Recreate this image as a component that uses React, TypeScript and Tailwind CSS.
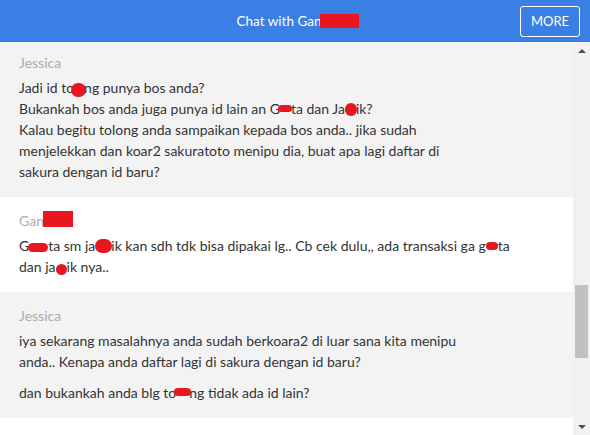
import React from 'react'

const Blot = ({ className }: { className: string }) => (
  <span className={`inline-block bg-[#e8161e] rounded-full ${className}`} />
)

const Message = ({
  name,
  white,
  className = '',
  children,
}: {
  name: React.ReactNode
  white?: boolean
  className?: string
  children: React.ReactNode
}) => (
  <div className={`${white ? 'bg-white' : 'bg-[#f3f3f4]'} px-[19px] pt-[13px] pb-[15px] ${className}`}>
    <div className="text-[14px] leading-[21px] text-[#acacac] mb-[4px]">{name}</div>
    <div className="text-[14px] leading-[21px] text-[#333333]">{children}</div>
  </div>
)

export default function App() {
  return (
    <div className="w-[590px] h-[435px] overflow-hidden flex flex-col bg-white font-['Lato','Open_Sans',sans-serif]">
      {/* Header */}
      <div className="h-[42px] shrink-0 bg-[#3a7fe3] grid grid-cols-[1fr_auto_1fr] items-center">
        <div />
        <div className="text-white text-[13.5px] leading-none flex items-end ml-[6px]">
          Chat with Gan
          <span className="inline-block w-[39px] h-[14px] bg-[#e8161e] -ml-[1px]" />
        </div>
        <div className="flex justify-end pr-[10px]">
          <button className="w-[60px] h-[31px] border border-white rounded-[3px] text-white text-[13px] leading-none">
            MORE
          </button>
        </div>
      </div>

      {/* Body */}
      <div className="flex flex-1 min-h-0">
        <div className="flex-1 overflow-hidden">
          <Message name="Jessica" className="-mt-[3px]">
            Jadi id to<Blot className="w-[15px] h-[14px] align-[-4px] -ml-[3px] -mr-[2px]" />ng punya bos anda?
            <br />
            Bukankah bos anda juga punya id lain an G
            <Blot className="w-[14px] h-[7px] align-[2px] -ml-[2px] -mr-[1px]" />ta dan Ja
            <Blot className="w-[12px] h-[13px] align-[-2px] -mr-[1px]" />ik?
            <br />
            Kalau begitu tolong anda sampaikan kepada bos anda.. jika sudah
            <br />
            menjelekkan dan koar2 sakuratoto menipu dia, buat apa lagi daftar di
            <br />
            sakura dengan id baru?
          </Message>

          <Message
            white
            name={
              <>
                Gan
                <span className="inline-block w-[30px] h-[16px] bg-[#e8161e] align-[-1px] -ml-[1px]" />
              </>
            }
          >
            G<Blot className="w-[20px] h-[9px] align-[-1px] -ml-[1px]" />ta sm ja
            <Blot className="w-[17px] h-[14px] align-[-2px] -mr-[1px]" />ik kan sdh tdk bisa dipakai lg.. Cb cek
            dulu,, ada transaksi ga g<Blot className="w-[12px] h-[8px] align-[1px]" />ta
            <br />
            dan ja<Blot className="w-[11px] h-[11px] align-[-3px]" />ik nya..
          </Message>

          <Message name="Jessica">
            <p>
              iya sekarang masalahnya anda sudah berkoara2 di luar sana kita menipu
              <br />
              anda.. Kenapa anda daftar lagi di sakura dengan id baru?
            </p>
            <p className="mt-[10px]">
              dan bukankah anda blg to<Blot className="w-[17px] h-[8px] align-[2px] -ml-[2px] -mr-[2px]" />ng tidak
              ada id lain?
            </p>
          </Message>
        </div>

        {/* Scrollbar */}
        <div className="w-[17px] shrink-0 bg-[#f1f1f1] flex flex-col items-center">
          <div className="h-[17px] w-full flex items-center justify-center">
            <span className="w-0 h-0 border-l-[4px] border-r-[4px] border-b-[4px] border-l-transparent border-r-transparent border-b-[#505050]" />
          </div>
          <div className="h-[226px]" />
          <div className="w-[13px] h-[73px] bg-[#c1c1c1]" />
          <div className="flex-1" />
          <div className="h-[17px] w-full flex items-center justify-center">
            <span className="w-0 h-0 border-l-[4px] border-r-[4px] border-t-[4px] border-l-transparent border-r-transparent border-t-[#505050]" />
          </div>
        </div>
      </div>
    </div>
  )
}
